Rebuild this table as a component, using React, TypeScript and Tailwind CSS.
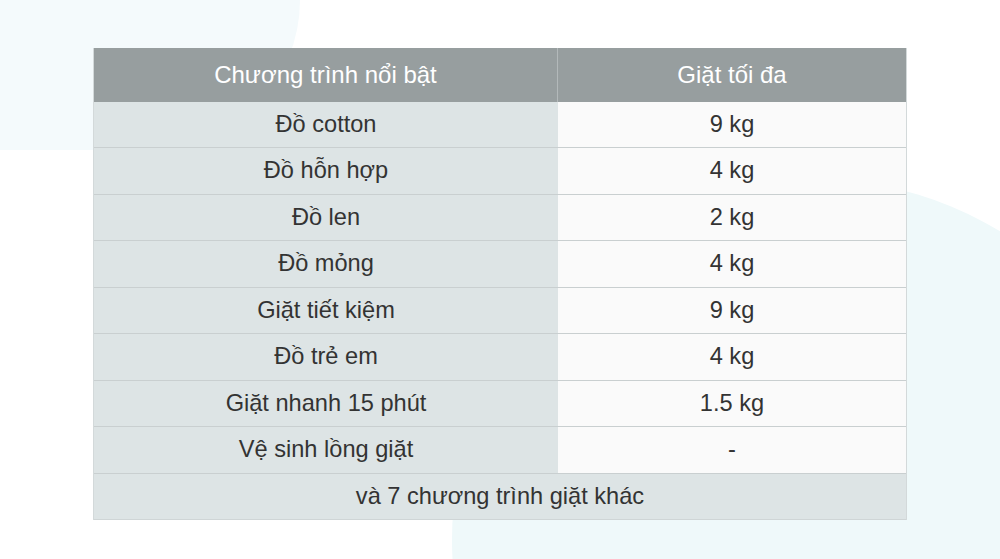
const rows: [string, string][] = [
  ["Đồ cotton", "9 kg"],
  ["Đồ hỗn hợp", "4 kg"],
  ["Đồ len", "2 kg"],
  ["Đồ mỏng", "4 kg"],
  ["Giặt tiết kiệm", "9 kg"],
  ["Đồ trẻ em", "4 kg"],
  ["Giặt nhanh 15 phút", "1.5 kg"],
  ["Vệ sinh lồng giặt", "-"],
];

export default function App() {
  return (
    <div
      className="relative w-[1000px] h-[559px] overflow-hidden bg-white"
      style={{ fontFamily: '"Liberation Sans", Arial, sans-serif' }}
    >
      {/* background blobs */}
      <div className="absolute left-0 top-0 w-[300px] h-[150px] rounded-br-[150px] bg-[#f4fafc]" />
      <div className="absolute left-[452px] top-[179px] w-[722px] h-[722px] rounded-full bg-[#eff9fa]" />

      <div className="relative flex justify-center pt-[48px]">
        <div className="w-[814px] border-x border-[#d3d9da] text-[#333] text-[23.6px]">
          <div className="grid grid-cols-[464px_1fr] h-[54px] bg-[#979e9f] text-white text-[24px]">
            <div className="flex items-center justify-center border-r border-[#b3b9ba]">
              Chương trình nổi bật
            </div>
            <div className="flex items-center justify-center">Giặt tối đa</div>
          </div>
          {rows.map(([name, kg]) => (
            <div
              key={name}
              className="grid grid-cols-[464px_1fr] h-[46.44px] border-b border-[#c9cfd0]"
            >
              <div className="flex items-center justify-center bg-[#dde4e5]">{name}</div>
              <div className="flex items-center justify-center bg-[#fafafa]">{kg}</div>
            </div>
          ))}
          <div className="flex items-center justify-center h-[46.44px] bg-[#dde4e5] border-b border-[#cfd5d6]">
            và 7 chương trình giặt khác
          </div>
        </div>
      </div>
    </div>
  );
}
